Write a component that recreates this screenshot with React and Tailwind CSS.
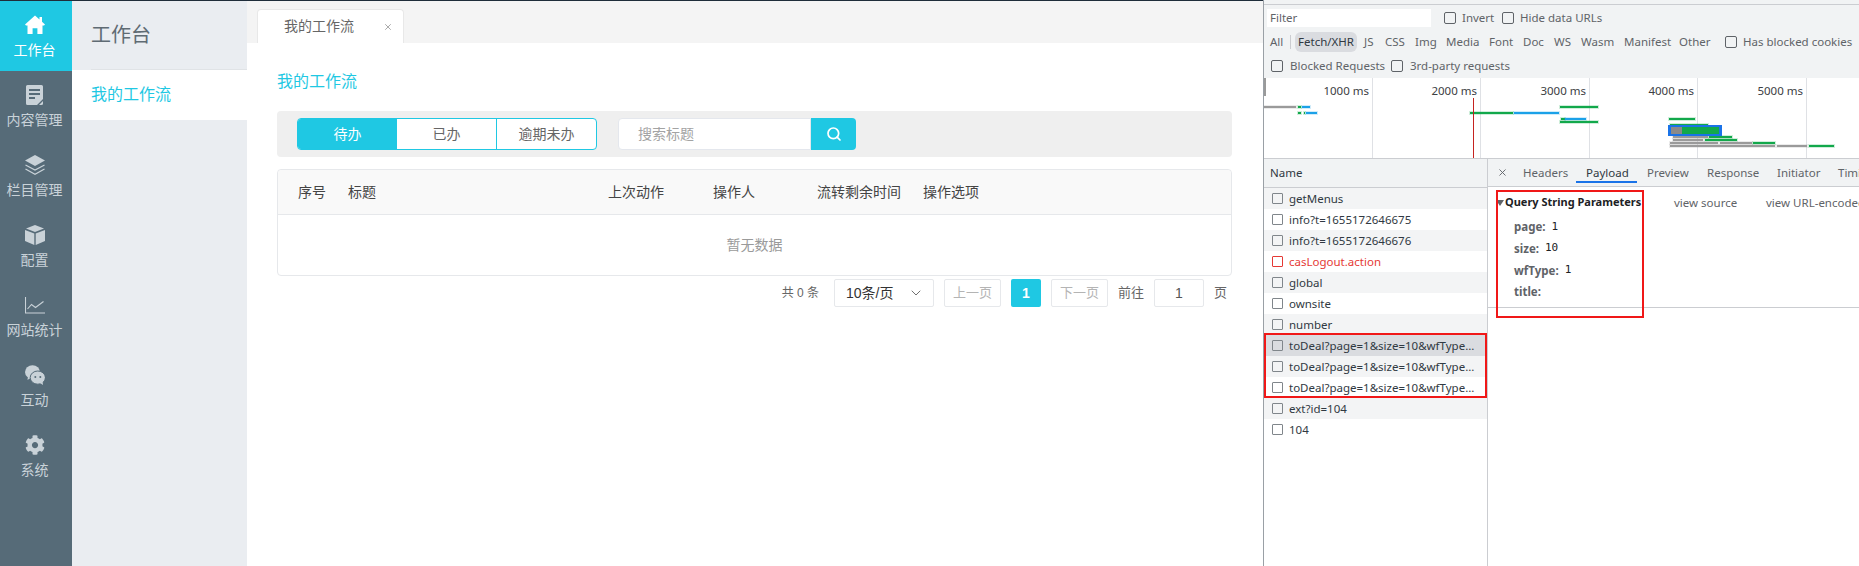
import React from 'react';
import { FaCog } from 'react-icons/fa';
import { Search, ChevronDown, X } from 'lucide-react';

const ICON_BG = '#566b78';

function HomeIcon() {
  return (
    <svg width="20" height="20" viewBox="0 0 20 20" fill="currentColor">
      <path d="M10 .5 L14.5 4.5 V2 H17 V6.7 L20 9.6 L19 10.6 H17.5 V19 H12.4 V13.2 H7.6 V19 H2.5 V10.6 H1 L0 9.6 Z" />
    </svg>
  );
}

function FileIcon() {
  return (
    <svg width="20" height="20" viewBox="0 0 20 20">
      <path d="M2.5 0 H16.5 A1.5 1.5 0 0 1 18 1.5 V14 L12 20 H2.5 A1.5 1.5 0 0 1 1 18.5 V1.5 A1.5 1.5 0 0 1 2.5 0 Z" fill="currentColor" />
      <path d="M4 5 H15 M4 9 H15 M4 13 H10" stroke={ICON_BG} strokeWidth="1.8" />
      <path d="M14 20 L18 16 V18.5 A1.5 1.5 0 0 1 16.5 20 Z" fill="currentColor" />
    </svg>
  );
}

function LayersIcon() {
  return (
    <svg width="20" height="20" viewBox="0 0 20 20" fill="none" stroke="currentColor">
      <path d="M10 0 L20 5.5 L10 11 L0 5.5 Z" fill="currentColor" stroke="none" />
      <path d="M0.5 10 L10 15 L19.5 10" strokeWidth="1.2" />
      <path d="M0.5 14 L10 19.2 L19.5 14" strokeWidth="1.2" />
    </svg>
  );
}

function CubeIcon() {
  return (
    <svg width="20" height="20" viewBox="0 0 20 20" fill="currentColor">
      <path d="M10 0 L19 3.5 L10 7 L1 3.5 Z" />
      <path d="M0 5 L9.3 8.6 V20 L0 16 Z" />
      <path d="M20 5 L10.7 8.6 V20 L20 16 Z" />
    </svg>
  );
}

function ChartIcon() {
  return (
    <svg width="20" height="17" viewBox="0 0 20 17" fill="none" stroke="currentColor" strokeWidth="1.1">
      <path d="M.5 0 V16 H20" />
      <path d="M2.5 12 L6.5 7.5 L10.5 10.5 L18.5 4.5" />
    </svg>
  );
}

function ChatIcon() {
  return (
    <svg width="20" height="20" viewBox="0 0 20 20">
      <ellipse cx="7.5" cy="7" rx="7.5" ry="6.8" fill="currentColor" />
      <path d="M3 11 L2.5 15 L7 12 Z" fill="currentColor" />
      <ellipse cx="12.8" cy="12.6" rx="7.6" ry="6.6" fill="currentColor" stroke={ICON_BG} strokeWidth="1" />
      <path d="M15 18 L18 20 L17.5 16 Z" fill="currentColor" />
      <circle cx="10.3" cy="12" r="1" fill={ICON_BG} />
      <circle cx="15.3" cy="12" r="1" fill={ICON_BG} />
    </svg>
  );
}

const menus = [
  { label: '内容管理', icon: <FileIcon /> },
  { label: '栏目管理', icon: <LayersIcon /> },
  { label: '配置', icon: <CubeIcon /> },
  { label: '网站统计', icon: <ChartIcon /> },
  { label: '互动', icon: <ChatIcon /> },
  { label: '系统', icon: <FaCog size={20} /> },
];

function Sidebar() {
  return (
    <div className="w-[72px] shrink-0 bg-[#566b78] text-[#c9d2d8]">
      <div className="flex h-[70px] flex-col items-center bg-[#1fc8e3] pt-[13px] pr-[3px] text-white">
        <div className="flex h-[22px] items-center"><HomeIcon /></div>
        <span className="mt-[6px] text-[14px] leading-[16px]">工作台</span>
      </div>
      {menus.map((m) => (
        <div key={m.label} className="flex h-[70px] flex-col items-center pt-[13px] pr-[3px]">
          <div className="flex h-[22px] items-center">{m.icon}</div>
          <span className="mt-[6px] text-[14px] leading-[16px] whitespace-nowrap">{m.label}</span>
        </div>
      ))}
    </div>
  );
}

function SubMenu() {
  return (
    <div className="w-[175px] shrink-0 bg-[#eaedf1]">
      <div className="ml-[19px] h-[69px] border-b border-[#e0e3e6] pt-[20px] text-[20px] leading-[28px] text-[#5f6b73]">工作台</div>
      <div className="flex h-[50px] items-center bg-white pl-[19px] text-[16px] text-[#1fc8e3]">我的工作流</div>
    </div>
  );
}

function PageBtn({ children }) {
  return (
    <div className="flex h-[28px] w-[57px] items-center justify-center rounded-[2px] border border-[#e6e8eb] text-[13px] text-[#b4b4b4]">{children}</div>
  );
}

function MainArea() {
  return (
    <div className="min-w-0 flex-1 bg-white">
      <div className="flex h-[42px] items-end bg-[#f4f4f4] pl-[10px]">
        <div className="flex h-[34px] w-[147px] items-center rounded-t-[4px] border border-b-0 border-[#e8e8e8] bg-white pl-[26px] text-[14px] text-[#666]">
          <span>我的工作流</span>
          <X size={10} strokeWidth={1.5} className="ml-[29px] text-[#777]" />
        </div>
      </div>

      <div className="pt-[29px] pr-[31px] pl-[30px]">
        <div className="text-[16px] leading-[20px] text-[#1fc8e3]">我的工作流</div>

        <div className="mt-[19px] flex h-[46px] items-center rounded-[4px] bg-[#efefef] px-[20px]">
          <div className="flex h-[32px] w-[300px] rounded-[4px] border border-[#1fc8e3] bg-white text-[14px] text-[#666]">
            <div className="flex w-[99px] items-center justify-center rounded-l-[3px] bg-[#1fc8e3] text-white">待办</div>
            <div className="flex w-[100px] items-center justify-center border-r border-[#1fc8e3]">已办</div>
            <div className="flex flex-1 items-center justify-center">逾期未办</div>
          </div>
          <div className="ml-[21px] flex h-[32px] w-[193px] items-center rounded-l-[4px] border border-[#e4e7ed] bg-white pl-[19px] text-[14px] text-[#a3a3a3]">搜索标题</div>
          <div className="flex h-[32px] w-[45px] items-center justify-center rounded-r-[4px] bg-[#1fc8e3] text-white">
            <Search size={16} strokeWidth={2.6} />
          </div>
        </div>

        <div className="mt-[12px] h-[107px] rounded-[4px] border border-[#e6e8eb]">
          <div className="flex h-[45px] items-center rounded-t-[4px] border-b border-[#e6e8eb] bg-[#f9f9f9] pl-[20px] text-[14px] text-[#444]">
            <span className="w-[50px]">序号</span>
            <span className="w-[260px]">标题</span>
            <span className="w-[105px]">上次动作</span>
            <span className="w-[104px]">操作人</span>
            <span className="w-[106px]">流转剩余时间</span>
            <span>操作选项</span>
          </div>
          <div className="flex h-[60px] items-center justify-center text-[14px] text-[#9a9a9a]">暂无数据</div>
        </div>

        <div className="mt-[3px] flex h-[28px] items-center justify-end pr-[5px] text-[13px] text-[#666]">
          <span className="mr-[15px] text-[12px]">共 0 条</span>
          <div className="mr-[10px] flex h-[28px] w-[100px] items-center justify-between rounded-[2px] border border-[#e6e8eb] pr-[9px] pl-[11px] text-[14px] text-[#333]">
            <span>10条/页</span>
            <ChevronDown size={16} strokeWidth={1.4} className="text-[#666]" />
          </div>
          <PageBtn>上一页</PageBtn>
          <div className="mx-[10px] flex h-[28px] w-[30px] items-center justify-center rounded-[2px] bg-[#1fc8e3] text-[14px] font-bold text-white">1</div>
          <PageBtn>下一页</PageBtn>
          <span className="ml-[10px]">前往</span>
          <div className="mx-[10px] flex h-[28px] w-[50px] items-center justify-center rounded-[2px] border border-[#e6e8eb] text-[14px] text-[#555]">1</div>
          <span>页</span>
        </div>
      </div>
    </div>
  );
}

function Check() {
  return <span className="inline-block h-[12px] w-[12px] shrink-0 rounded-[2px] border border-[#5f6368] bg-transparent" />;
}

const typeFilters = [
  { label: 'JS', cls: 'w-[21px]' },
  { label: 'CSS', cls: 'w-[30px]' },
  { label: 'Img', cls: 'w-[31px]' },
  { label: 'Media', cls: 'w-[43px]' },
  { label: 'Font', cls: 'w-[34px]' },
  { label: 'Doc', cls: 'w-[31px]' },
  { label: 'WS', cls: 'w-[27px]' },
  { label: 'Wasm', cls: 'w-[43px]' },
  { label: 'Manifest', cls: 'w-[55px]' },
  { label: 'Other', cls: 'w-[46px]' },
];

const gridLines = [
  { x: 1372, label: '1000 ms' },
  { x: 1480, label: '2000 ms' },
  { x: 1589, label: '3000 ms' },
  { x: 1697, label: '4000 ms' },
  { x: 1806, label: '5000 ms' },
];

const GRAY = '#9a9a9a';
const GREEN = '#12a84b';
const BLUE = '#1ba1e8';

// [x1, x2, y, colour], page coordinates
const bars = [
  [1264, 1296, 107, GRAY], [1298, 1301, 107, GREEN], [1302, 1310, 107, BLUE],
  [1298, 1301, 113, GREEN], [1304, 1305, 113, GREEN], [1306, 1317, 113, BLUE],
  [1470, 1513, 113, GREEN], [1514, 1559, 113, BLUE],
  [1560, 1598, 107, GREEN], [1561, 1565, 119, GREEN], [1565, 1586, 119, BLUE],
  [1560, 1598, 122, GREEN], [1669, 1695, 119, GREEN], [1670, 1708, 125, GREEN],
  [1673, 1708, 137, GRAY], [1709, 1732, 137, GREEN],
  [1673, 1703, 140, GRAY], [1705, 1737, 140, GREEN],
  [1670, 1718, 143, GRAY], [1720, 1752, 143, GRAY], [1753, 1775, 143, GREEN],
  [1670, 1775, 146, GRAY], [1777, 1807, 146, GRAY], [1809, 1834, 146, GREEN],
];

function Overview() {
  return (
    <svg width="595" height="80" viewBox="1264 78 595 80" className="block bg-white">
      {gridLines.map((g) => (
        <g key={g.x}>
          <line x1={g.x + 0.5} x2={g.x + 0.5} y1="78" y2="158" stroke="#dfe1e5" />
          <text x={g.x - 3} y="95" textAnchor="end" fontSize="11.5" fill="#3c4043">{g.label}</text>
        </g>
      ))}
      <rect x="1264" y="78" width="2" height="18" fill="#9a9a9a" />
      {bars.map(([a, b, y, c], i) => (
        <g key={i}>
          <rect x={a - 1} y={y - 2} width={b - a + 2} height="4" fill={c} opacity="0.2" />
          <rect x={a} y={y - 1} width={b - a} height="2" fill={c} />
        </g>
      ))}
      <rect x="1473" y="98" width="1" height="60" fill="#c5221f" />
      <rect x="1668" y="125" width="54" height="11" fill="#1a73e8" />
      <rect x="1671" y="127" width="11" height="7" fill="#8a8a8a" />
      <rect x="1682" y="127" width="37" height="7" fill={GREEN} />
    </svg>
  );
}

const topRows = [
  { name: 'getMenus' },
  { name: 'info?t=1655172646675' },
  { name: 'info?t=1655172646676' },
  { name: 'casLogout.action', red: true },
  { name: 'global' },
  { name: 'ownsite' },
  { name: 'number' },
];

function NameRow({ name, red, bg }) {
  return (
    <div className={`flex h-[21px] items-center pl-[8px] ${bg}`}>
      <span className={`inline-block h-[11px] w-[11px] shrink-0 rounded-[1px] border ${red ? 'border-[#e53935]' : 'border-[#80868b]'}`} />
      <span className={`ml-[6px] whitespace-nowrap ${red ? 'text-[#e53935]' : 'text-[#303942]'}`}>{name}</span>
    </div>
  );
}

function NameColumn() {
  const dealName = 'toDeal?page=1&size=10&wfType...';
  return (
    <div className="w-[224px] shrink-0 border-r border-[#cbcdd1] bg-white">
      <div className="flex h-[29px] items-center border-b border-[#cbcdd1] bg-[#f1f3f4] pl-[6px] text-[#303942]">Name</div>
      {topRows.map((r, i) => (
        <NameRow key={r.name} name={r.name} red={r.red} bg={i % 2 === 0 ? 'bg-[#f3f4f5]' : 'bg-white'} />
      ))}
      <div className="relative">
        <NameRow name={dealName} bg="bg-[#dadce0]" />
        <NameRow name={dealName} bg="bg-[#f3f4f5]" />
        <NameRow name={dealName} bg="bg-white" />
        <div className="absolute -top-[2px] right-0 bottom-0 left-0 border-2 border-[#f01818]" />
      </div>
      <NameRow name="ext?id=104" bg="bg-[#f3f4f5]" />
      <NameRow name="104" bg="bg-white" />
    </div>
  );
}

function Param({ k, v }) {
  return (
    <div className="flex h-[21.7px] items-center pl-[26px]">
      <span className="font-bold text-[#5f6368]">{k}:</span>
      <span className="ml-[6px] font-['DejaVu_Sans_Mono',monospace] text-[11px] text-[#202124]">{v}</span>
    </div>
  );
}

function Payload() {
  return (
    <div className="relative min-w-0 flex-1 overflow-hidden bg-white">
      <div className="flex h-[28px] items-center border-b border-[#cbcdd1] bg-[#f1f3f4] whitespace-nowrap text-[#5f6368]">
        <X size={11} strokeWidth={2} className="ml-[9px] mr-[15px] shrink-0" />
        <span className="w-[63px] shrink-0">Headers</span>
        <span className="relative w-[61px] shrink-0 text-[#303942]">
          Payload
          <span className="absolute top-[17px] -left-[10px] h-[2px] w-[61px] bg-[#1a73e8]" />
        </span>
        <span className="w-[60px] shrink-0">Preview</span>
        <span className="w-[70px] shrink-0">Response</span>
        <span className="w-[61px] shrink-0">Initiator</span>
        <span className="shrink-0">Timing</span>
      </div>

      <div className="h-[121px] border-b border-[#cbcdd1] pt-[5px]">
        <div className="flex h-[21px] items-center whitespace-nowrap">
          <span className="ml-[8px] h-0 w-0 border-x-[4px] border-t-[6px] border-x-transparent border-t-[#5f6368]" />
          <span className="ml-[1px] w-[169px] shrink-0 text-[11px] font-bold text-[#202124]">Query String Parameters</span>
          <span className="w-[92px] shrink-0 text-[#5f6368]">view source</span>
          <span className="shrink-0 text-[#5f6368]">view URL-encoded</span>
        </div>
        <div className="mt-[3px]">
          <Param k="page" v="1" />
          <Param k="size" v="10" />
          <Param k="wfType" v="1" />
          <Param k="title" v="" />
        </div>
      </div>

      <div className="absolute top-[31px] left-[8px] h-[128px] w-[148px] border-2 border-[#f01818]" />
    </div>
  );
}

function DevTools() {
  return (
    <div className="flex h-full min-w-0 flex-1 flex-col border-l border-[#9aa0a6] bg-[#f1f3f4] font-['Noto_Sans',sans-serif] text-[11.5px]">
      <div className="h-[5px] shrink-0 border-b border-[#cbcdd1]" />
      <div className="flex h-[25px] shrink-0 items-center pl-[3px] text-[#5f6368]">
        <div className="mt-[1px] flex h-[18px] w-[164px] items-center bg-white pl-[3px] text-[#5f6368]">Filter</div>
        <span className="ml-[13px] flex items-center">
          <Check /><span className="ml-[6px] w-[40px]">Invert</span>
        </span>
        <span className="flex items-center">
          <Check /><span className="ml-[6px] whitespace-nowrap">Hide data URLs</span>
        </span>
      </div>
      <div className="flex h-[24px] shrink-0 items-center whitespace-nowrap text-[#5f6368]">
        <span className="w-[20px] pl-[6px] box-content">All</span>
        <span className="h-[14px] w-[1px] bg-[#cbcdd1]" />
        <span className="ml-[4px] mr-[7px] flex h-[20px] w-[62px] items-center justify-center rounded-[6px] bg-[#dadce0] text-[#303942]">Fetch/XHR</span>
        {typeFilters.map((f) => (
          <span key={f.label} className={f.cls}>{f.label}</span>
        ))}
        <Check />
        <span className="ml-[6px]">Has blocked cookies</span>
      </div>
      <div className="flex h-[24px] shrink-0 items-center pl-[7px] whitespace-nowrap text-[#5f6368]">
        <Check /><span className="ml-[7px] w-[101px]">Blocked Requests</span>
        <Check /><span className="ml-[7px]">3rd-party requests</span>
      </div>
      <Overview />
      <div className="flex min-h-0 flex-1 border-t border-[#cbcdd1]">
        <NameColumn />
        <Payload />
      </div>
    </div>
  );
}

export default function App() {
  return (
    <div className="flex h-[566px] w-[1859px] overflow-hidden bg-white font-['Liberation_Sans','Noto_Sans_CJK_SC',sans-serif]">
      <div className="flex h-full w-[1263px] shrink-0 border-t border-[#1f2d3a]">
        <Sidebar />
        <SubMenu />
        <MainArea />
      </div>
      <DevTools />
    </div>
  );
}
